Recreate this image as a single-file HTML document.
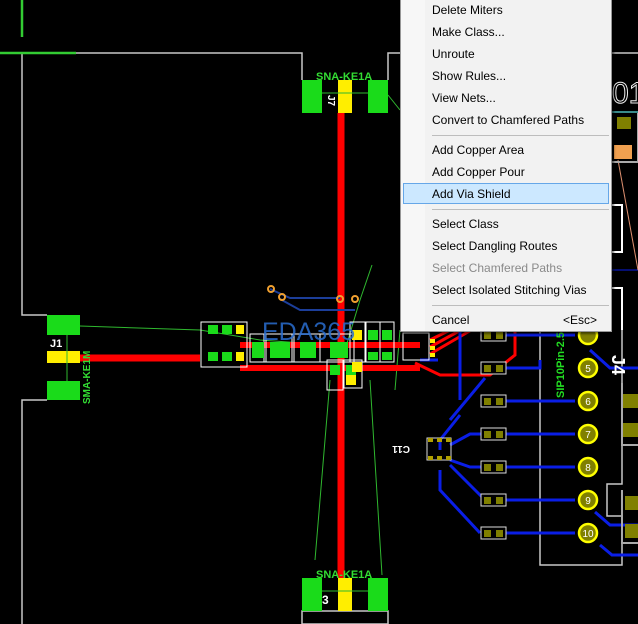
<!DOCTYPE html>
<html><head><meta charset="utf-8"><style>
html,body{margin:0;padding:0;background:#000;width:638px;height:624px;overflow:hidden}
svg{position:absolute;left:0;top:0}
.menu{position:absolute;left:400px;top:-2px;width:210px;height:332px;background:#f2f2f2;border:1px solid #979797;box-shadow:2px 2px 2px rgba(0,0,0,.5);font-family:"Liberation Sans",sans-serif;font-size:12px;color:#000}
.menu .g{position:absolute;left:0;top:0;width:24px;height:100%;background:#f7f7f7}
.it{position:absolute;left:31px;height:20px;line-height:20px;white-space:nowrap}
.sep{position:absolute;left:31px;right:2px;height:1px;background:#bdbdbd}
.hl{position:absolute;left:2px;width:204px;height:19px;top:184px;background:#cce8ff;border:1px solid #66a7e8}
</style></head><body>
<svg width="638" height="624" viewBox="0 0 638 624" font-family="Liberation Sans,sans-serif">
<g stroke="#c8c8c8" stroke-width="1.5" fill="none">
<path d="M22 53H302V80M388 80V53H400M610 53H638"/>
<path d="M22 53V315H47M47 400H22V624"/>
<rect x="302" y="611" width="86" height="13"/>
<path d="M540 330V565H622V516H607V484H622V330"/>
</g>
<path d="M22 0V37M0 53H76" stroke="#33cc33" stroke-width="2.5"/>
<g stroke="#2fb82f" stroke-width="1" fill="none">
<path d="M80 326L200 330L260 340L330 345"/>
<path d="M388 95L400 110"/>
<path d="M345 350L360 300L372 265M370 380L382 575M330 380L315 560"/>
<path d="M400 330L395 390"/>
</g>
<g stroke="#ff0000" fill="none">
<path d="M341 113V578" stroke-width="7"/>
<path d="M80 358H200" stroke-width="7"/>
<path d="M240 345H420M240 368H420" stroke-width="6"/>
<path d="M415 363L440 375H490L515 355V300" stroke-width="3"/>
<path d="M430 340L460 325M430 347L470 325M430 354L480 325" stroke-width="3"/>
</g>
<g stroke="#0a1ee6" stroke-width="3" fill="none">
<path d="M270 289L290 298H340M280 299L300 310H355" stroke="#1c3e9a" stroke-width="2"/>
<path d="M460 330V400M506 335H575M506 368H540V360M506 401H575M506 434H575M506 467H575M506 500H575M506 533H575"/>
<path d="M420 360H438M460 415L440 440V450M485 378L450 420M450 445L470 434H481M450 460L470 467H481M440 470L440 490L480 533M450 465L485 500"/>
<path d="M590 350L610 368H638M595 512L610 525H638M600 545L612 555H638"/>
<path d="M600 270H638" stroke-width="1"/>
</g>
<rect x="302" y="80" width="20" height="33" fill="#1adb1a"/>
<rect x="368" y="80" width="20" height="33" fill="#1adb1a"/>
<rect x="338" y="80" width="14" height="33" fill="#ffee00"/>
<path d="M322 93H368" stroke="#2fb82f"/>
<text x="316" y="80" fill="#33dd33" font-size="11" font-weight="bold">SNA-KE1A</text>
<text x="323" y="100" fill="#fff" font-size="10" font-weight="bold" transform="rotate(90 328 100)">J7</text>
<rect x="302" y="578" width="20" height="33" fill="#1adb1a"/>
<rect x="368" y="578" width="20" height="33" fill="#1adb1a"/>
<rect x="338" y="578" width="14" height="33" fill="#ffee00"/>
<path d="M322 591H368" stroke="#2fb82f"/>
<text x="316" y="578" fill="#33dd33" font-size="11" font-weight="bold">SNA-KE1A</text>
<text x="322" y="604" fill="#fff" font-size="12" font-weight="bold">3</text>
<rect x="47" y="315" width="33" height="20" fill="#1adb1a"/>
<rect x="47" y="351" width="33" height="12" fill="#ffee00"/>
<rect x="47" y="381" width="33" height="19" fill="#1adb1a"/>
<path d="M67 335V381" stroke="#2fb82f"/>
<text x="50" y="347" fill="#fff" font-size="11" font-weight="bold">J1</text>
<text x="0" y="0" fill="#33dd33" font-size="10" font-weight="bold" transform="translate(90 404) rotate(-90)">SMA-KE1M</text>
<g fill="none" stroke="#fff" stroke-width="1">
<rect x="201" y="322" width="46" height="45"/>
<rect x="250" y="334" width="16" height="28"/><rect x="264" y="334" width="30" height="28"/><rect x="292" y="334" width="28" height="28"/>
<rect x="320" y="334" width="34" height="28"/><rect x="327" y="360" width="16" height="30"/><rect x="344" y="360" width="18" height="28"/>
<rect x="350" y="322" width="15" height="40"/><rect x="366" y="322" width="14" height="40"/><rect x="380" y="322" width="14" height="40"/>
<rect x="403" y="333" width="26" height="27"/>
</g>
<g fill="#1adb1a">
<rect x="208" y="325" width="10" height="9"/><rect x="222" y="325" width="10" height="9"/><rect x="208" y="352" width="10" height="9"/><rect x="222" y="352" width="10" height="9"/>
<rect x="252" y="342" width="12" height="8"/><rect x="270" y="342" width="20" height="8"/><rect x="300" y="342" width="16" height="8"/><rect x="330" y="342" width="18" height="8"/>
<rect x="252" y="350" width="12" height="8"/><rect x="270" y="350" width="20" height="8"/><rect x="300" y="350" width="16" height="8"/><rect x="330" y="350" width="18" height="8"/>
<rect x="368" y="330" width="10" height="10"/><rect x="382" y="330" width="10" height="10"/><rect x="368" y="352" width="10" height="8"/><rect x="382" y="352" width="10" height="8"/>
<rect x="330" y="365" width="10" height="10"/><rect x="346" y="365" width="10" height="10"/>
</g>
<g fill="#ffee00">
<rect x="236" y="325" width="8" height="9"/><rect x="236" y="352" width="8" height="9"/><rect x="352" y="330" width="10" height="10"/><rect x="352" y="362" width="10" height="10"/><rect x="346" y="375" width="10" height="10"/>
<rect x="430" y="339" width="5" height="4"/><rect x="430" y="346" width="5" height="4"/><rect x="430" y="353" width="5" height="4"/>
</g>
<text x="262" y="340" fill="#2a6ed0" font-size="25" opacity=".85">EDA365</text>
<g fill="none" stroke="#f0a030" stroke-width="2"><circle cx="271" cy="289" r="3"/><circle cx="282" cy="297" r="3"/><circle cx="340" cy="299" r="3"/><circle cx="355" cy="299" r="3"/></g>
<g fill="#000" stroke="#ddd"><rect x="481" y="329" width="25" height="12"/><rect x="481" y="362" width="25" height="12"/><rect x="481" y="395" width="25" height="12"/><rect x="481" y="428" width="25" height="12"/><rect x="481" y="461" width="25" height="12"/><rect x="481" y="494" width="25" height="12"/><rect x="481" y="527" width="25" height="12"/></g>
<g fill="#808000"><rect x="484" y="332" width="7" height="7"/><rect x="496" y="332" width="7" height="7"/><rect x="484" y="365" width="7" height="7"/><rect x="496" y="365" width="7" height="7"/><rect x="484" y="398" width="7" height="7"/><rect x="496" y="398" width="7" height="7"/><rect x="484" y="431" width="7" height="7"/><rect x="496" y="431" width="7" height="7"/><rect x="484" y="464" width="7" height="7"/><rect x="496" y="464" width="7" height="7"/><rect x="484" y="497" width="7" height="7"/><rect x="496" y="497" width="7" height="7"/><rect x="484" y="530" width="7" height="7"/><rect x="496" y="530" width="7" height="7"/>
<rect x="622" y="394" width="16" height="14"/><rect x="622" y="423" width="16" height="14"/><rect x="625" y="496" width="13" height="14"/><rect x="625" y="524" width="13" height="14"/><rect x="617" y="117" width="14" height="12"/></g>
<rect x="614" y="145" width="18" height="14" fill="#f0a050"/>
<path d="M618 160L638 270" stroke="#e09070"/>
<rect x="608" y="112" width="30" height="50" fill="none" stroke="#aaa" stroke-width="2"/>
<path d="M608 112H638" stroke="#3a8a8a" stroke-width="2"/>
<path d="M612 205H622V252H612M612 288H622V330" stroke="#fff" stroke-width="2" fill="none"/>
<path d="M622 490V543H638" stroke="#aaa" fill="none" stroke-width="2"/>
<path d="M622 383V445H638" stroke="#aaa" fill="none" stroke-width="2"/>
<text x="612" y="103" fill="none" stroke="#eee" font-size="30">01</text>
<rect x="427" y="438" width="24" height="22" fill="none" stroke="#ddd"/>
<g fill="#b0a000"><rect x="428" y="438" width="5" height="4"/><rect x="437" y="438" width="5" height="4"/><rect x="446" y="438" width="5" height="4"/><rect x="428" y="456" width="5" height="4"/><rect x="437" y="456" width="5" height="4"/><rect x="446" y="456" width="5" height="4"/></g>
<text x="424" y="452" fill="#fff" font-size="10" font-weight="bold" transform="rotate(180 417 449)">C11</text>
<g fill="#808000" stroke="#ffff00" stroke-width="2.5"><circle cx="588" cy="335" r="9"/><circle cx="588" cy="368" r="9"/><circle cx="588" cy="401" r="9"/><circle cx="588" cy="434" r="9"/><circle cx="588" cy="467" r="9"/><circle cx="588" cy="500" r="9"/><circle cx="588" cy="533" r="9"/></g>
<g fill="#fff" font-size="10" text-anchor="middle"><text x="588" y="372">5</text><text x="588" y="405">6</text><text x="588" y="438">7</text><text x="588" y="471">8</text><text x="588" y="504">9</text><text x="588" y="537">10</text></g>
<text x="0" y="0" fill="#22dd22" font-size="11" font-weight="bold" transform="translate(564 398) rotate(-90)">SIP10Pin-2.5</text>
<text x="0" y="0" fill="#fff" font-size="18" font-weight="bold" transform="translate(612 355) rotate(90)">J4</text>
</svg>
<div class="menu"><div class="g"></div>
<div class="hl"></div>
<div class="it" style="top:1px">Delete Miters</div>
<div class="it" style="top:23px">Make Class...</div>
<div class="it" style="top:45px">Unroute</div>
<div class="it" style="top:67px">Show Rules...</div>
<div class="it" style="top:89px">View Nets...</div>
<div class="it" style="top:111px">Convert to Chamfered Paths</div>
<div class="sep" style="top:136px"></div>
<div class="it" style="top:141px">Add Copper Area</div>
<div class="it" style="top:163px">Add Copper Pour</div>
<div class="it" style="top:185px">Add Via Shield</div>
<div class="sep" style="top:210px"></div>
<div class="it" style="top:215px">Select Class</div>
<div class="it" style="top:237px">Select Dangling Routes</div>
<div class="it" style="top:259px;color:#8a8a8a">Select Chamfered Paths</div>
<div class="it" style="top:281px">Select Isolated Stitching Vias</div>
<div class="sep" style="top:306px"></div>
<div class="it" style="top:311px">Cancel</div>
<div class="it" style="top:311px;left:162px">&lt;Esc&gt;</div>
</div>
</body></html>
